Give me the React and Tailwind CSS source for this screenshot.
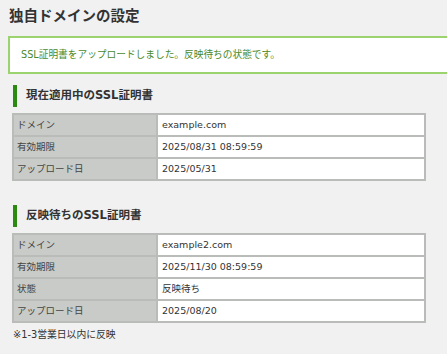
import React from "react";

const current = [
  ["ドメイン", "example.com"],
  ["有効期限", "2025/08/31 08:59:59"],
  ["アップロード日", "2025/05/31"],
];

const pending = [
  ["ドメイン", "example2.com"],
  ["有効期限", "2025/11/30 08:59:59"],
  ["状態", "反映待ち"],
  ["アップロード日", "2025/08/20"],
];

const SectionTitle = ({ children }) => (
  <div className="flex items-center h-[22px] ml-[13px]">
    <div className="w-[4px] h-[22px] bg-[#2b8a10]" />
    <h3 className="ml-[9px] text-[11.5px] font-bold text-[#333]">{children}</h3>
  </div>
);

const InfoTable = ({ rows }) => (
  <div className="ml-[12px] w-[414px] border-2 border-[#babcba] bg-white">
    {rows.map(([label, value], i) => (
      <div key={label} className={`flex ${i > 0 ? "h-[22px] border-t-2 border-[#babcba]" : "h-[20px]"}`}>
        <div className="w-[144px] bg-[#c8cbc7] border-r-2 border-[#babcba] pl-[3px] flex items-center text-[9.5px] text-[#444]">
          {label}
        </div>
        <div className="flex-1 pl-[4px] flex items-center text-[9.5px] text-[#333]">{value}</div>
      </div>
    ))}
  </div>
);

export default function App() {
  return (
    <div
      className="w-[447px] h-[354px] overflow-hidden bg-[#f0f1f0]"
      style={{ fontFamily: '"DejaVu Sans", "Noto Sans CJK JP", sans-serif' }}
    >
      <h1 className="pt-[5px] pl-[9px] text-[14.5px] font-bold text-[#333] leading-[22px]">独自ドメインの設定</h1>

      {/* Notice */}
      <div className="mt-[9px] ml-[8px] w-[460px] h-[38px] border-2 border-[#9bd46f] bg-white flex items-center pl-[11px]">
        <p className="text-[9.7px] text-[#4a8a2a]">SSL証明書をアップロードしました。反映待ちの状態です。</p>
      </div>

      <div className="mt-[11px]">
        <SectionTitle>現在適用中のSSL証明書</SectionTitle>
      </div>
      <div className="mt-[6px]">
        <InfoTable rows={current} />
      </div>

      <div className="mt-[24px]">
        <SectionTitle>反映待ちのSSL証明書</SectionTitle>
      </div>
      <div className="mt-[6px]">
        <InfoTable rows={pending} />
      </div>

      <p className="mt-[5px] ml-[13px] text-[9.8px] text-[#333]">※1-3営業日以内に反映</p>
    </div>
  );
}
